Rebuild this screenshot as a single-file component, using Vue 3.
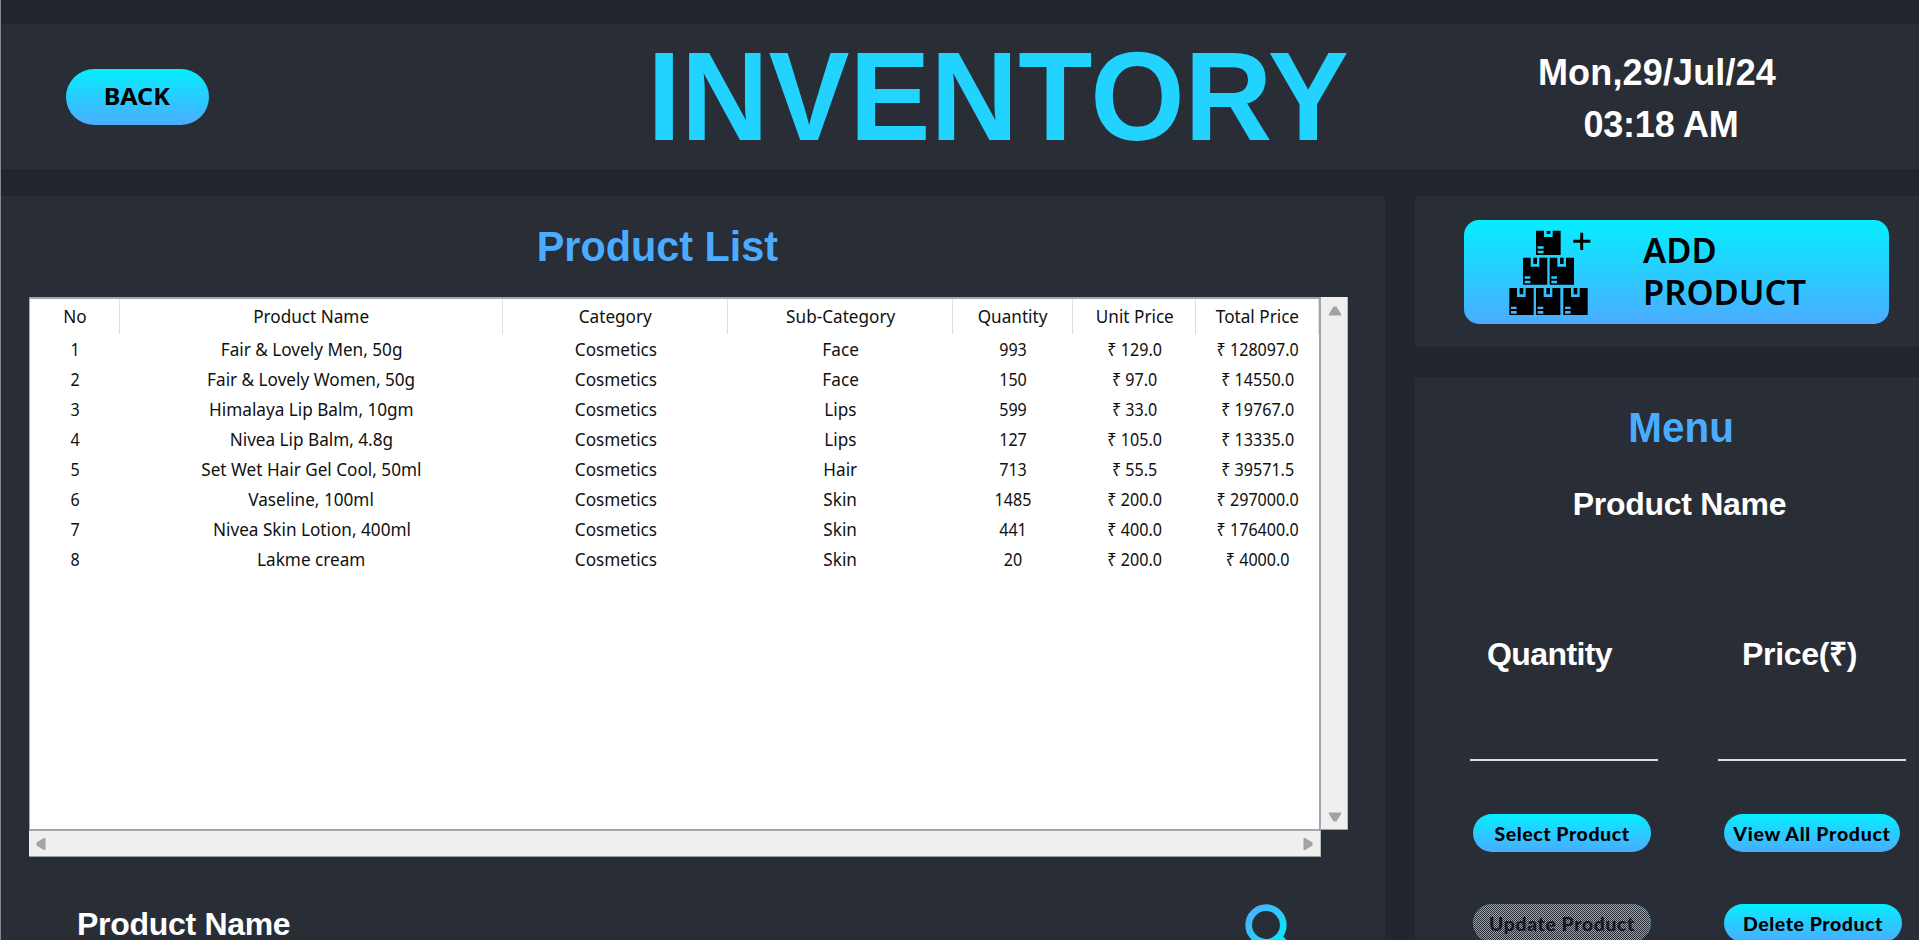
<script setup>
const columns = ['No', 'Product Name', 'Category', 'Sub-Category', 'Quantity', 'Unit Price', 'Total Price']

const rows = [
  ['1', 'Fair & Lovely Men, 50g', 'Cosmetics', 'Face', '993', '₹ 129.0', '₹ 128097.0'],
  ['2', 'Fair & Lovely Women, 50g', 'Cosmetics', 'Face', '150', '₹ 97.0', '₹ 14550.0'],
  ['3', 'Himalaya Lip Balm, 10gm', 'Cosmetics', 'Lips', '599', '₹ 33.0', '₹ 19767.0'],
  ['4', 'Nivea Lip Balm, 4.8g', 'Cosmetics', 'Lips', '127', '₹ 105.0', '₹ 13335.0'],
  ['5', 'Set Wet Hair Gel Cool, 50ml', 'Cosmetics', 'Hair', '713', '₹ 55.5', '₹ 39571.5'],
  ['6', 'Vaseline, 100ml', 'Cosmetics', 'Skin', '1485', '₹ 200.0', '₹ 297000.0'],
  ['7', 'Nivea Skin Lotion, 400ml', 'Cosmetics', 'Skin', '441', '₹ 400.0', '₹ 176400.0'],
  ['8', 'Lakme cream', 'Cosmetics', 'Skin', '20', '₹ 200.0', '₹ 4000.0'],
]

// Stack of parcels: [x, y] of each full-height box
const boxes = [[129, 127], [209, 127], [88, 218], [168, 218], [250, 218]]
</script>

<template>
  <div class="window">
    <header class="topbar">
      <button class="pill back"><span>BACK</span></button>
      <h1><span>INVENTORY</span></h1>
      <div class="clock">
        <div class="date">Mon,29/Jul/24</div>
        <div class="time">03:18 AM</div>
      </div>
    </header>

    <div class="body">
      <main class="list-panel">
        <h2 class="list-title"><span>Product List</span></h2>
        <div class="table-wrap">
          <div class="table">
            <div class="row head">
              <div v-for="c in columns" :key="c" class="cell"><span>{{ c }}</span></div>
            </div>
            <div v-for="r in rows" :key="r[0]" class="row">
              <div v-for="(v, i) in r" :key="i" class="cell" :class="{ words: i > 0 && i < 4 }"><span>{{ v }}</span></div>
            </div>
          </div>
          <div class="vscroll">
            <svg width="14" height="10" viewBox="0 0 14 10"><path d="M5.5 .5h3L13 8v1.500H1V8z" fill="#a3a3a3" /></svg>
            <svg width="14" height="10" viewBox="0 0 14 10"><path d="M5.500 9.500h3L13 2V.5H1V2z" fill="#a3a3a3" /></svg>
          </div>
          <div class="hscroll">
            <svg width="10" height="14" viewBox="0 0 10 14"><path d="M.5 5.500v3L8 13h1.500V1H8z" fill="#a3a3a3" /></svg>
            <svg width="10" height="14" viewBox="0 0 10 14"><path d="M9.500 5.500v3L2 13H.5V1H2z" fill="#a3a3a3" /></svg>
          </div>
        </div>
        <div class="search-row">
          <label class="field">Product Name</label>
          <svg class="search" width="50" height="50" viewBox="0 0 50 50" fill="none">
            <defs>
              <linearGradient id="lens" gradientUnits="userSpaceOnUse" x1="4" y1="4" x2="42" y2="42">
                <stop offset="0" stop-color="#4facfe" />
                <stop offset="1" stop-color="#00f2fe" />
              </linearGradient>
            </defs>
            <circle cx="21" cy="21" r="17.300" stroke="url(#lens)" stroke-width="6.700" />
            <path d="M34 34l11 11" stroke="url(#lens)" stroke-width="8" stroke-linecap="round" />
          </svg>
        </div>
      </main>

      <aside class="side">
        <section class="add-panel">
          <button class="add">
            <svg width="140" height="104" viewBox="0 15 420 312">
              <path
                transform="translate(168 47)" fill-rule="evenodd"
                d="M0 0H24V19H50V0H74V73H0Z M32 1H43V10H32Z M5 47H23V54H5Z M5 60H23V68H5Z"
              />
              <path
                v-for="b in boxes" :key="b.join()" :transform="`translate(${b[0]} ${b[1]})`" fill-rule="evenodd"
                d="M0 1H23V28H49V1H73V82H0Z M31 1H42V20H31Z M5 57H22V64H5Z M5 70H22V78H5Z"
              />
              <path d="M305 53V105M280 79H331" stroke="#000" stroke-width="9" />
            </svg>
            <span class="add-text">ADD<br />PRODUCT</span>
          </button>
        </section>

        <section class="menu-panel">
          <h2 class="menu-title"><span>Menu</span></h2>
          <div class="field menu-name">Product Name</div>
          <div class="grid labels">
            <div class="field qty">Quantity</div>
            <div class="field price">Price(₹)</div>
          </div>
          <div class="grid inputs">
            <div class="line"></div>
            <div class="line"></div>
          </div>
          <div class="grid actions">
            <button class="pill small"><span>Select Product</span></button>
            <button class="pill small view"><span>View All Product</span></button>
            <button class="pill small disabled" disabled><span>Update Product</span></button>
            <button class="pill small"><span>Delete Product</span></button>
          </div>
        </section>
      </aside>
    </div>
  </div>
</template>

<style>
html, body { margin: 0; background: #22252d; overflow: hidden; }
</style>

<style scoped>
* { box-sizing: border-box; }
.window {
  width: 1919px;
  height: 940px;
  padding-top: 24px;
  border-left: 1px solid #83868b;
  background: #22252d;
  overflow: hidden;
  font-family: "Liberation Sans", Arial, sans-serif;
  color: #fff;
}
h1, h2 { margin: 0; font-weight: 700; }
span { display: inline-block; white-space: nowrap; }
button { border: 0; padding: 0; color: #000; background: linear-gradient(#05eeff, #4bacff); }

.topbar {
  display: grid;
  grid-template-columns: 532px 934px 1fr;
  align-items: center;
  height: 145px;
  background: #292d36;
}
.pill { display: flex; align-items: center; justify-content: center; font-weight: 700; }
.back { width: 143px; height: 56px; margin-left: 65px; border-radius: 28px; font-family: "Noto Sans", sans-serif; font-size: 24px; }
.back span { transform: translate(-1px, -1px) scaleX(1.04); }
h1 { font-size: 127px; line-height: 145px; color: #22d3ff; text-align: center; padding-right: 4px; }
h1 span { transform: scaleX(.956); }
.clock { font-size: 36px; line-height: 52px; font-weight: 700; letter-spacing: .15px; width: 380px; text-align: center; padding-top: 4px; }
.time { padding-left: 8px; letter-spacing: -.2px; }

.body { display: flex; gap: 30px; margin-top: 27px; height: 744px; }
.list-panel { width: 1384px; background: #292d36; }
.list-title { margin-top: 20px; font-size: 43px; line-height: 60px; color: #4bacff; text-align: center; padding-right: 71px; }
.list-title span { transform: scaleX(.962); }

.table-wrap { display: grid; grid-template-columns: 1292px 27px; grid-template-rows: 534px 26px; margin: 21px 0 0 28px; }
.table { background: #fff; border: 2px solid #a0a6ae; border-left-width: 1px; color: #111; font: 17.500px/30px "Noto Sans", sans-serif; }
.row { display: grid; grid-template-columns: 90px 383px 225px 225px 120px 123px 1fr; height: 30px; }
.cell { text-align: center; min-width: 0; }
.cell span { transform: scaleX(.92); margin: 0 -10px; }
.words span { transform: scaleX(.98); }
.head { height: 35px; line-height: 34px; }
.head .cell { border-right: 1px solid #dedede; padding-left: 1px; }
.head .cell span { transform: scaleX(.98); }
.vscroll, .hscroll { display: flex; align-items: center; justify-content: space-between; background: #efefef; }
.vscroll { flex-direction: column; height: 533px; padding: 9px 0 7px 1px; border-right: 1px solid #b9babc; border-bottom: 1px solid #9b9c9e; }
.hscroll { padding: 0 7px; border-bottom: 1px solid #9b9c9e; border-right: 1px solid #b9babc; }
.search-row { display: flex; justify-content: space-between; margin-top: 44px; padding: 0 90px 0 76px; height: 46px; }
.field { font-size: 32px; line-height: 46px; font-weight: 700; letter-spacing: -.3px; }
.search { margin-top: 3px; flex: none; }

.side { flex: 1; display: flex; flex-direction: column; gap: 30px; }
.add-panel { flex: none; height: 151px; padding: 24px 0 0 49px; background: #292d36; }
.add { display: flex; width: 425px; height: 104px; padding-left: 16px; border-radius: 15px; text-align: left; }
.add-text { margin-left: 23px; padding-top: 9px; font: 600 34.500px/42px "Noto Sans", sans-serif; }

.menu-panel { flex: 1; background: #292d36; padding-top: 20px; }
.menu-title { font-size: 43px; line-height: 60px; color: #4bacff; text-align: center; margin-left: 29px; }
.menu-title span { transform: scaleX(.94); }
.menu-name { text-align: center; margin: 24px 0 0 25px; }
.grid { display: grid; grid-template-columns: 188px 188px; column-gap: 60px; margin-left: 55px; }
.labels { margin-top: 104px; }
.labels .qty { padding-left: 17px; letter-spacing: -.6px; }
.labels .price { padding-left: 24px; }
.inputs { margin-top: 82px; }
.line { height: 2px; background: #dcdde0; }
.actions { margin-top: 53px; grid-template-columns: 178px 178px; column-gap: 73px; row-gap: 52px; margin-left: 58px; }
.small { position: relative; overflow: hidden; height: 38px; width: 178px; border-radius: 19px; font-family: Lato, sans-serif; font-size: 19.500px; font-weight: 900; letter-spacing: .55px; }
.small.view { width: 176px; letter-spacing: .7px; }
.small span { margin: 0 -10px; }
.disabled::after {
  content: "";
  position: absolute;
  inset: 0;
  background: repeating-conic-gradient(#292d36 0 25%, transparent 0 50%) 0 0 / 2px 2px;
}
</style>
